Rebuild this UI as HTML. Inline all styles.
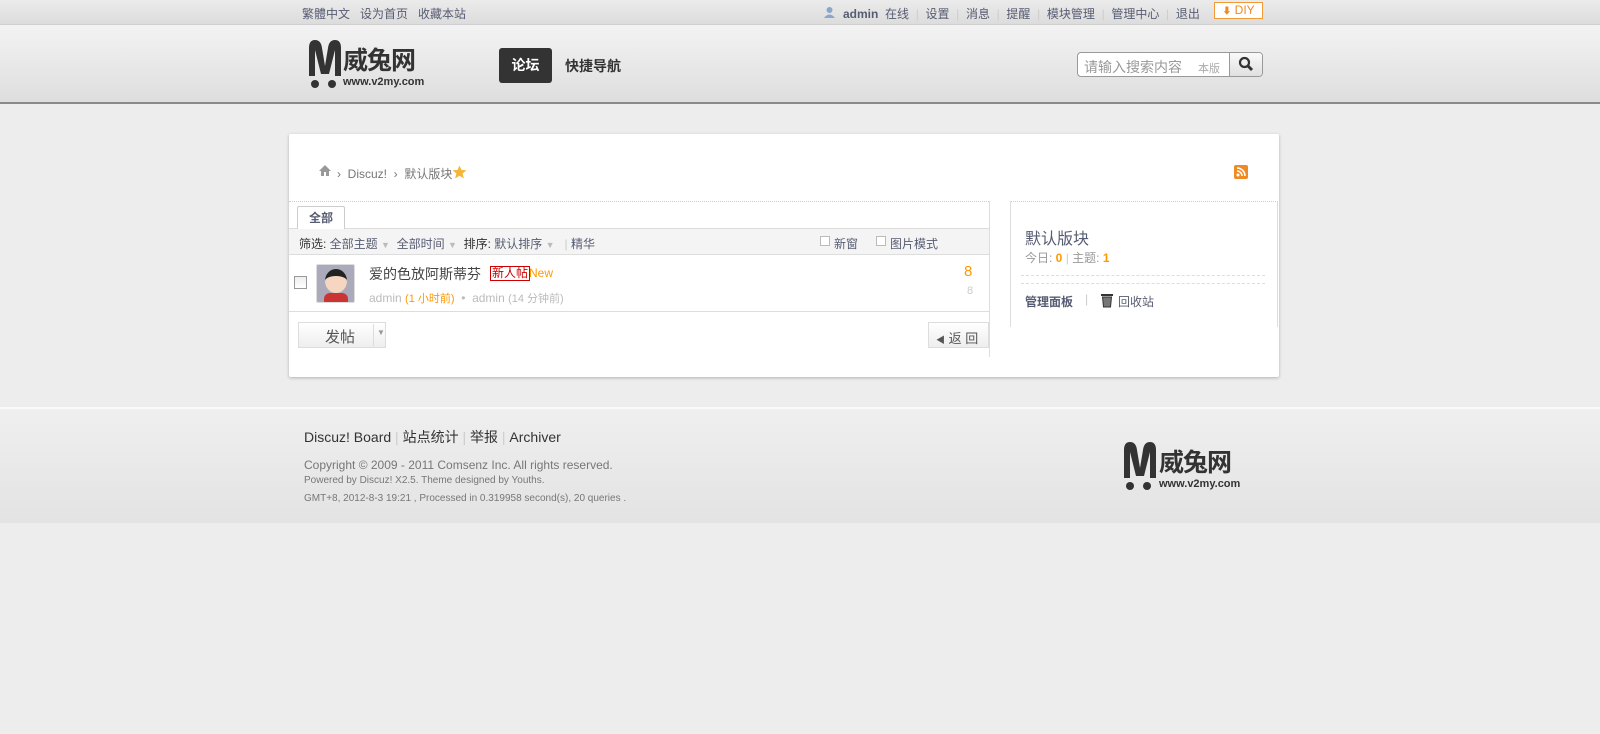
<!DOCTYPE html>
<html><head><meta charset="utf-8">
<style>
*{margin:0;padding:0;box-sizing:border-box}
body{width:1600px;height:734px;background:#ededed;font-family:"Liberation Sans","Noto Sans CJK SC",sans-serif;font-size:12px;color:#555;position:relative;overflow:hidden}
.a{position:absolute;white-space:nowrap}
#top{left:0;top:0;width:1600px;height:25px;background:linear-gradient(#ebebeb,#dcdcdc);border-bottom:1px solid #cfcfcf}
#hd{left:0;top:25px;width:1600px;height:79px;background:linear-gradient(#f3f3f3,#dedede);border-bottom:2px solid #8a8a8a}
.tl{color:#565c72;font-size:12px;top:5px}
.sep{color:#ccc}
#card{left:289px;top:134px;width:990px;height:243px;background:#fff;box-shadow:0 1px 3px rgba(0,0,0,.25);border-radius:2px}
#ft{left:0;top:407px;width:1600px;height:116px;background:linear-gradient(#efefef,#e3e3e3);border-top:2px solid #fafafa}
</style></head><body>
<div id="top" class="a"></div>
<div class="a tl" style="left:302px">繁體中文&nbsp;&nbsp;&nbsp;设为首页&nbsp;&nbsp;&nbsp;收藏本站</div>
<svg class="a" style="left:823px;top:6px" width="13" height="13"><circle cx="6.5" cy="4" r="3" fill="#8aa6c8"/><path d="M1 12 Q6.5 5 12 12Z" fill="#8aa6c8"/></svg>
<div class="a tl" style="left:843px"><b>admin</b>&nbsp;&nbsp;在线 <span class="sep">&nbsp;|&nbsp;</span> 设置 <span class="sep">&nbsp;|&nbsp;</span> 消息 <span class="sep">&nbsp;|&nbsp;</span> 提醒 <span class="sep">&nbsp;|&nbsp;</span> 模块管理 <span class="sep">&nbsp;|&nbsp;</span> 管理中心 <span class="sep">&nbsp;|&nbsp;</span> 退出</div>
<div class="a" style="left:1214px;top:2px;width:49px;height:17px;border:1px solid #f19a36;background:#fff;color:#f08a24;font-size:12px;line-height:15px;text-align:center"><span style="font-size:9px">⬇</span> DIY</div>
<div id="hd" class="a"></div>
<svg class="a" style="left:305px;top:38px" width="40" height="52"><path d="M4 38 L4 10 Q4 2 10 2 Q16 2 17 10 L20 28 L23 10 Q24 2 30 2 Q36 2 36 10 L36 38 L30 38 L30 12 L24 36 L16 36 L10 12 L10 38Z" fill="#333"/><circle cx="10" cy="46" r="4" fill="#333"/><circle cx="27" cy="46" r="4" fill="#333"/></svg>
<div class="a" style="left:343px;top:41px;font-size:25px;font-weight:bold;color:#333;letter-spacing:-1px">威兔网</div>
<div class="a" style="left:343px;top:76px;font-size:11px;font-weight:bold;color:#333">www.v2my.com</div>
<div class="a" style="left:499px;top:48px;width:53px;height:35px;background:#333;border-radius:3px;color:#fff;font-weight:bold;font-size:14px;line-height:35px;text-align:center">论坛</div>
<div class="a" style="left:565px;top:56px;font-weight:bold;font-size:14px;color:#333">快捷导航</div>
<div class="a" style="left:1077px;top:52px;width:186px;height:25px;border:1px solid #999;border-radius:4px;background:#fff"></div>
<div class="a" style="left:1084px;top:57px;font-size:14px;color:#999">请输入搜索内容</div>
<div class="a" style="left:1198px;top:60px;font-size:11px;color:#aaa">本版</div>
<div class="a" style="left:1229px;top:53px;width:33px;height:23px;background:linear-gradient(#fafafa,#e0e0e0);border-left:1px solid #999;border-radius:0 3px 3px 0"></div>
<svg class="a" style="left:1238px;top:56px" width="16" height="16"><circle cx="6.5" cy="6.5" r="4.5" fill="none" stroke="#333" stroke-width="2.2"/><path d="M10 10 L14 14" stroke="#333" stroke-width="3"/></svg>

<div id="card" class="a"></div>
<svg class="a" style="left:318px;top:164px" width="14" height="12"><path d="M7 1 L1 7 H3 V12 H6 V8 H8 V12 H11 V7 H13Z" fill="#999"/></svg>
<div class="a" style="left:337px;top:165px;color:#777;font-size:12px">› &nbsp;Discuz! &nbsp;› &nbsp;默认版块</div>
<svg class="a" style="left:452px;top:165px" width="15" height="14"><path d="M7.5 0.5 L9.5 5 L14.5 5.3 L10.6 8.5 L11.9 13.5 L7.5 10.7 L3.1 13.5 L4.4 8.5 L0.5 5.3 L5.5 5Z" fill="#f5b638"/></svg>
<svg class="a" style="left:1234px;top:165px" width="14" height="14"><rect width="14" height="14" rx="2" fill="#f08a24"/><circle cx="4" cy="10" r="1.5" fill="#fff"/><path d="M3 6 A5 5 0 0 1 8 11 M3 3 A8 8 0 0 1 11 11" fill="none" stroke="#fff" stroke-width="1.6"/></svg>

<div class="a" style="left:289px;top:201px;width:700px;border-top:1px dotted #ccc"></div>
<div class="a" style="left:989px;top:201px;height:156px;border-left:1px solid #ddd"></div>
<div class="a" style="left:297px;top:206px;width:48px;height:23px;border:1px solid #ccc;border-bottom:none;background:#fff;border-radius:2px 2px 0 0;text-align:center;line-height:22px;font-weight:bold;color:#565c72;font-size:12px;z-index:2">全部</div>
<div class="a" style="left:289px;top:228px;width:700px;height:27px;background:#f4f4f4;border-top:1px solid #ddd;border-bottom:1px solid #ddd"></div>
<div class="a" style="left:299px;top:235px;color:#333;font-size:12px">筛选: <span style="color:#565c72">全部主题</span> <span style="color:#bbb;font-size:9px">▼</span>&nbsp;&nbsp;<span style="color:#565c72">全部时间</span> <span style="color:#bbb;font-size:9px">▼</span>&nbsp;&nbsp;排序: <span style="color:#565c72">默认排序</span> <span style="color:#bbb;font-size:9px">▼</span>&nbsp;&nbsp; <span style="color:#ccc">|</span> <span style="color:#565c72">精华</span></div>
<div class="a" style="left:820px;top:236px;width:10px;height:10px;border:1px solid #bbb;background:#fff"></div>
<div class="a" style="left:834px;top:235px;color:#565c72">新窗</div>
<div class="a" style="left:876px;top:236px;width:10px;height:10px;border:1px solid #bbb;background:#fff"></div>
<div class="a" style="left:890px;top:235px;color:#565c72">图片模式</div>

<div class="a" style="left:294px;top:276px;width:13px;height:13px;border:1px solid #999;background:linear-gradient(#eee,#fff)"></div>
<div class="a" style="left:316px;top:264px;width:39px;height:39px;border:1px solid #ddd;background:#aab;border-radius:2px;overflow:hidden">
<div style="position:absolute;left:8px;top:4px;width:22px;height:24px;border-radius:50%;background:#f6d6c0;border-top:7px solid #222"></div>
<div style="position:absolute;left:7px;top:28px;width:24px;height:12px;background:#c33;border-radius:6px 6px 0 0"></div></div>
<div class="a" style="left:369px;top:264px;font-size:14px;color:#444">爱的色放阿斯蒂芬</div>
<div class="a" style="left:490px;top:266px;border:1px solid #c00;color:#c00;font-size:12px;line-height:13px;padding:0 1px">新人帖</div>
<div class="a" style="left:529px;top:266px;color:#f90;font-size:12px">New</div>
<div class="a" style="left:369px;top:290px;color:#bbb;font-size:12px">admin <span style="color:#f90;font-size:11px">(1 小时前)</span> &nbsp;•&nbsp; admin <span style="font-size:11px">(14 分钟前)</span></div>
<div class="a" style="left:964px;top:263px;color:#f90;font-size:15px">8</div>
<div class="a" style="left:967px;top:285px;color:#ccc;font-size:11px">8</div>
<div class="a" style="left:289px;top:311px;width:700px;border-top:1px solid #ddd"></div>
<div class="a" style="left:298px;top:322px;width:88px;height:26px;border:1px solid #ddd;background:linear-gradient(#fff,#eee)"></div>
<div class="a" style="left:325px;top:326px;font-size:15px;color:#555">发帖</div>
<div class="a" style="left:373px;top:324px;height:22px;border-left:1px solid #ddd"></div>
<div class="a" style="left:377px;top:328px;color:#999;font-size:8px">▼</div>
<div class="a" style="left:928px;top:322px;width:61px;height:26px;border:1px solid #ddd;background:linear-gradient(#fff,#eee)"></div>
<div class="a" style="left:936px;top:328px;color:#555;font-size:13px"><span style="font-size:9px">◀</span> 返 回</div>

<div class="a" style="left:1010px;top:201px;width:268px;border-top:1px dotted #ccc"></div>
<div class="a" style="left:1010px;top:201px;height:126px;border-left:1px solid #ddd"></div>
<div class="a" style="left:1277px;top:201px;height:126px;border-left:1px solid #ddd"></div>
<div class="a" style="left:1025px;top:225px;font-size:16px;color:#565c72">默认版块</div>
<div class="a" style="left:1025px;top:249px;color:#999;font-size:12px">今日: <b style="color:#f90">0</b> <span style="color:#ccc">|</span> 主题: <b style="color:#f90">1</b></div>
<div class="a" style="left:1021px;top:275px;width:244px;border-top:1px dashed #ddd"></div>
<div class="a" style="left:1021px;top:283px;width:244px;border-top:1px dashed #ddd"></div>
<div class="a" style="left:1025px;top:293px;font-weight:bold;color:#565c72;font-size:12px">管理面板</div>
<div class="a" style="left:1085px;top:292px;color:#ccc">|</div>
<svg class="a" style="left:1100px;top:292px" width="14" height="16"><rect x="1" y="2" width="12" height="2" fill="#333"/><path d="M2.5 5 H11.5 L10.5 15 H3.5Z" fill="#777" stroke="#333"/></svg>
<div class="a" style="left:1118px;top:293px;color:#565c72;font-size:12px">回收站</div>

<div id="ft" class="a"></div>
<div class="a" style="left:304px;top:427px;font-size:14px;color:#333">Discuz! Board <span style="color:#ccc">|</span> 站点统计 <span style="color:#ccc">|</span> 举报 <span style="color:#ccc">|</span> Archiver</div>
<div class="a" style="left:304px;top:458px;font-size:12px;color:#777">Copyright © 2009 - 2011 Comsenz Inc. All rights reserved.</div>
<div class="a" style="left:304px;top:475px;font-size:10px;color:#777">Powered by Discuz! X2.5. Theme designed by Youths.</div>
<div class="a" style="left:304px;top:493px;font-size:10px;color:#777">GMT+8, 2012-8-3 19:21 , Processed in 0.319958 second(s), 20 queries .</div>
<svg class="a" style="left:1120px;top:440px" width="40" height="52"><path d="M4 38 L4 10 Q4 2 10 2 Q16 2 17 10 L20 28 L23 10 Q24 2 30 2 Q36 2 36 10 L36 38 L30 38 L30 12 L24 36 L16 36 L10 12 L10 38Z" fill="#333"/><circle cx="10" cy="46" r="4" fill="#333"/><circle cx="27" cy="46" r="4" fill="#333"/></svg>
<div class="a" style="left:1159px;top:443px;font-size:25px;font-weight:bold;color:#333;letter-spacing:-1px">威兔网</div>
<div class="a" style="left:1159px;top:478px;font-size:11px;font-weight:bold;color:#333">www.v2my.com</div>
</body></html>
